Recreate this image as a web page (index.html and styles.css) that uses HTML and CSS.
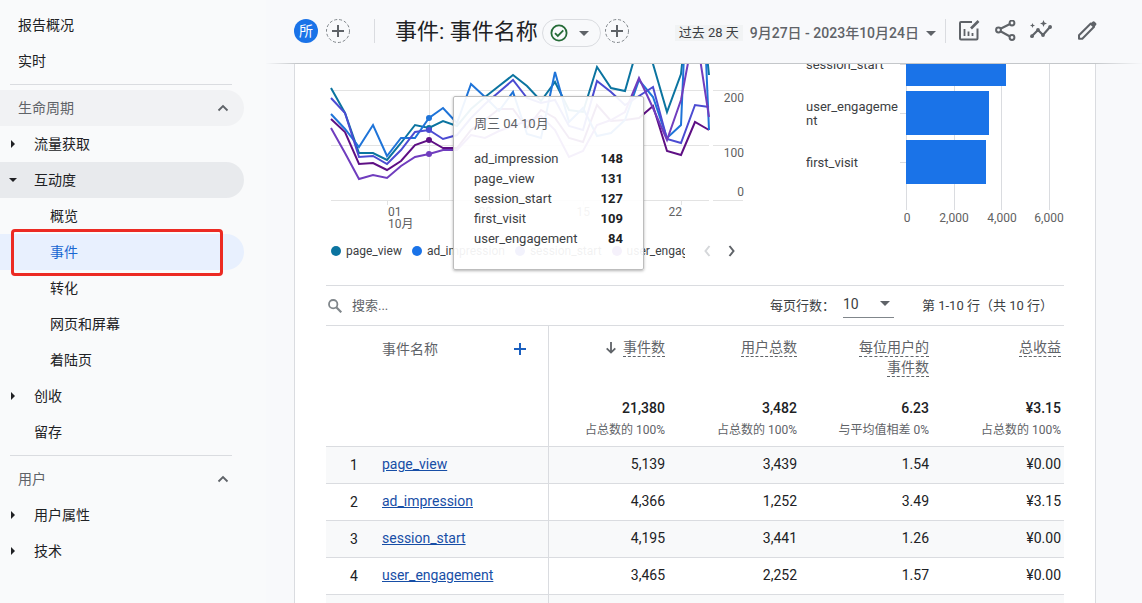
FILE: index.html
```html
<!DOCTYPE html>
<html lang="zh-CN">
<head>
<meta charset="utf-8">
<title>事件: 事件名称</title>
<link rel="stylesheet" href="styles.css">
</head>
<body>
<div class="app">
  <nav class="sidebar" aria-label="报告">
    <a class="nav-item" href="#">报告概况</a>
    <a class="nav-item" href="#">实时</a>
    <hr class="nav-rule">
    <button class="nav-item nav-head nav-shade">生命周期
      <svg class="chevron" viewBox="0 0 12 12"><path d="M1.500 8.500 6 4l4.500 4.500" fill="none" stroke="currentColor" stroke-width="1.800"/></svg>
    </button>
    <a class="nav-item nav-group" href="#"><svg class="tri" viewBox="0 0 8 8"><path d="M2 0l4 4-4 4z"/></svg>流量获取</a>
    <a class="nav-item nav-group nav-open" href="#"><svg class="tri" viewBox="0 0 8 8"><path d="M0 2h8L4 6z"/></svg>互动度</a>
    <a class="nav-item nav-sub" href="#">概览</a>
    <a class="nav-item nav-sub nav-current" href="#" aria-current="page">事件<span class="marker"></span></a>
    <a class="nav-item nav-sub" href="#">转化</a>
    <a class="nav-item nav-sub" href="#">网页和屏幕</a>
    <a class="nav-item nav-sub" href="#">着陆页</a>
    <a class="nav-item nav-group" href="#"><svg class="tri" viewBox="0 0 8 8"><path d="M2 0l4 4-4 4z"/></svg>创收</a>
    <a class="nav-item nav-leaf" href="#">留存</a>
    <hr class="nav-rule">
    <button class="nav-item nav-head">用户
      <svg class="chevron" viewBox="0 0 12 12"><path d="M1.500 8.500 6 4l4.500 4.500" fill="none" stroke="currentColor" stroke-width="1.800"/></svg>
    </button>
    <a class="nav-item nav-group" href="#"><svg class="tri" viewBox="0 0 8 8"><path d="M2 0l4 4-4 4z"/></svg>用户属性</a>
    <a class="nav-item nav-group" href="#"><svg class="tri" viewBox="0 0 8 8"><path d="M2 0l4 4-4 4z"/></svg>技术</a>
  </nav>

  <main class="main">
    <header class="topbar">
      <button class="avatar">所</button>
      <button class="add" aria-label="添加对比">
        <svg viewBox="0 0 24 24"><circle cx="12" cy="12" r="11.500" fill="none" stroke="#80868b" stroke-dasharray="3 2"/><path d="M12 6v12M6 12h12" stroke="#5f6368" stroke-width="2"/></svg>
      </button>
      <span class="divider divider-left"></span>
      <h1 class="title">事件: 事件名称</h1>
      <button class="status" aria-label="数据状态">
        <svg class="status-check" viewBox="0 0 18 18"><circle cx="9" cy="9" r="7.600" fill="none" stroke="#256b37" stroke-width="1.800"/><path d="M5 9.200l2.800 2.800 5.500-5.600" fill="none" stroke="#256b37" stroke-width="1.800"/></svg>
        <svg class="caret" viewBox="0 0 10 5"><path d="M0 0h10L5 5z"/></svg>
      </button>
      <button class="add" aria-label="添加过滤条件">
        <svg viewBox="0 0 24 24"><circle cx="12" cy="12" r="11.500" fill="none" stroke="#80868b" stroke-dasharray="3 2"/><path d="M12 6v12M6 12h12" stroke="#5f6368" stroke-width="2"/></svg>
      </button>
      <button class="daterange">
        <span class="preset">过去 28 天</span>
        <span class="dates">9月27日 - 2023年10月24日</span>
        <svg class="caret" viewBox="0 0 10 5"><path d="M0 0h10L5 5z"/></svg>
      </button>
      <span class="divider"></span>
      <div class="actions">
        <button class="icon" aria-label="自定义图表">
          <svg viewBox="0 0 22 22" fill="none" stroke="#5f6368" stroke-width="2"><path d="M14 2H3a1 1 0 0 0-1 1v15.500a1 1 0 0 0 1 1h15.500a1 1 0 0 0 1-1V8.500"/><path d="M6.500 9v7M10.500 11.500v4.500M14.500 13v3" stroke-width="1.800"/><path d="M13 8.500l7.500-7.500" stroke-width="2.600"/></svg>
        </button>
        <button class="icon" aria-label="分享">
          <svg viewBox="0 0 22 22" fill="none" stroke="#5f6368" stroke-width="2"><path d="M6 9l10-5M6 11l10 5.500"/><circle cx="4.500" cy="10" r="2.400"/><circle cx="18" cy="3" r="2.400"/><circle cx="18" cy="17.500" r="2.400"/></svg>
        </button>
        <button class="icon" aria-label="数据洞察">
          <svg viewBox="0 0 22 22"><path d="M2 16l6-6 5 5 7-8" fill="none" stroke="#5f6368" stroke-width="2.200"/><g fill="#5f6368"><circle cx="2" cy="16.200" r="1.900"/><circle cx="8" cy="10" r="1.900"/><circle cx="13" cy="15" r="1.900"/><circle cx="20.100" cy="7" r="1.900"/><path d="M13.500 0l1 2.500L17 3.500l-2.500 1-1 2.500-1-2.500-2.500-1 2.500-1zM2.500 3l.7 1.800L5 5.500l-1.800.7L2.500 8l-.7-1.800L0 5.500l1.800-.7z"/></g></svg>
        </button>
        <button class="icon icon-edit" aria-label="修改报告">
          <svg viewBox="0 0 22 22"><path d="M3 18.700v-3.400L14.800 3.500l3.300 3.300L6.300 18.700z" fill="none" stroke="#5f6368" stroke-width="2" stroke-linejoin="round"/><path d="M14.200 4.100l2.300-2.300c.7-.7 1.500-.7 2.200 0l1.200 1.200c.7.700.7 1.500 0 2.200l-2.300 2.300z" fill="#5f6368"/></svg>
        </button>
      </div>
    </header>

    <section class="card">
      <div class="charts">
        <div class="trend">
          <svg class="plot" viewBox="326 64 422 170" role="img" aria-label="事件数趋势">
            <g stroke="#e3e3e3"><path d="M331 90.500h378M713 90.500h30M331 145.500h378M713 145.500h30M331 200.500h378M713 200.500h30M429.500 64v136M387.500 200v5M681.500 200v5M485.500 200v5M583.500 200v5"/></g>
            <g fill="none" stroke-width="2" stroke-linejoin="miter">
              <polyline stroke="#5e0f84" points="331,119 345,132 359,164 373,163 387,170 401,161 415,145 429,140 443,148 457,148 471,130 485,120 499,109 513,109 527,128 541,110 555,118 569,138 583,142 597,105 611,121 625,120 639,118 653,106 667,151 681,155 695,122 709,130"/>
              <polyline stroke="#0b74a0" points="331,88 345,113 359,153 373,153 387,160 401,143 415,125 429,128 443,121 457,126 471,109 485,97 499,86 513,75 527,86 541,101 555,82 569,110 583,112 597,67 611,88 625,91 639,42 653,64 667,112 681,74 695,-60 709,75"/>
              <polyline stroke="#1f74d8" points="331,114 345,129 359,147 373,125 387,156 401,138 415,138 429,118 443,108 457,123 471,84 485,97 499,111 513,92 527,134 541,138 555,72 569,122 583,108 597,136 611,133 625,120 639,80 653,97 667,138 681,125 695,-200 709,130"/>
              <polyline stroke="#4b4bd2" points="331,98 345,113 359,157 373,156 387,164 401,150 415,132 429,130 443,139 457,135 471,118 485,104 499,92 513,80 527,98 541,103 555,100 569,126 583,130 597,81 611,92 625,105 639,96 653,87 667,139 681,143 695,105 709,107"/>
              <polyline stroke="#703dbe" points="331,128 345,153 359,179 373,175 387,178 401,166 415,157 429,154 443,150 457,150 471,135 485,138 499,131 513,126 527,121 541,116 555,130 569,157 583,151 597,125 611,120 625,112 639,78 653,108 667,140 681,100 695,26 709,117"/>
            </g>
            <circle cx="429" cy="128" r="3" fill="#0b74a0"/><circle cx="429" cy="118" r="3" fill="#1f74d8"/><circle cx="429" cy="130" r="3" fill="#4b4bd2"/><circle cx="429" cy="140" r="3" fill="#5e0f84"/><circle cx="429" cy="154" r="3" fill="#703dbe"/>
            <g class="axis"><text x="388" y="216">01</text><text x="388" y="228">10月</text></g>
            <g class="axis" text-anchor="end"><text x="492" y="216">08</text><text x="590" y="216">15</text><text x="682" y="216">22</text><text x="744" y="102">200</text><text x="744" y="157">100</text><text x="744" y="196">0</text></g>
          </svg>
          <div class="legend">
            <ul class="legend-items">
              <li><i class="dot dot-page"></i>page_view</li>
              <li><i class="dot dot-ad"></i>ad_impression</li>
              <li><i class="dot dot-session"></i>session_start</li>
              <li><i class="dot dot-user"></i>user_engagement</li>
            </ul>
            <button class="pager pager-off" aria-label="上一页"><svg viewBox="0 0 8 12"><path d="M6.500 1l-4 5 4 5" fill="none" stroke="currentColor" stroke-width="2"/></svg></button>
            <button class="pager" aria-label="下一页"><svg viewBox="0 0 8 12"><path d="M1.500 1l4 5-4 5" fill="none" stroke="currentColor" stroke-width="2"/></svg></button>
          </div>
          <div class="tooltip">
            <p class="tip-date">周三 04 10月</p>
            <dl class="tip-list">
              <dt>ad_impression</dt><dd>148</dd>
              <dt>page_view</dt><dd>131</dd>
              <dt>session_start</dt><dd>127</dd>
              <dt>first_visit</dt><dd>109</dd>
              <dt>user_engagement</dt><dd>84</dd>
            </dl>
          </div>
        </div>
        <div class="bars">
          <svg class="plot" viewBox="806 64 258 170" role="img" aria-label="各事件的事件数">
            <path stroke="#dadce0" d="M906.500 64v146M954.500 64v146M1001.500 64v146M1049.500 64v146M900 64.500h6M900 113.500h6M900 162.500h6"/>
            <g fill="#1a73e8"><path d="M906 64h100v22h-100zM906 91h83v44h-83zM906 140h80v44h-80z"/></g>
            <g class="bar-label"><text x="806" y="69">session_start</text><text x="806" y="111">user_engageme</text><text x="806" y="125">nt</text><text x="806" y="167">first_visit</text></g>
            <g class="axis" text-anchor="middle"><text x="907" y="222">0</text><text x="954" y="222">2,000</text><text x="1002" y="222">4,000</text><text x="1049" y="222">6,000</text></g>
          </svg>
        </div>
      </div>

      <div class="tools">
        <label class="search">
          <svg class="search-icon" viewBox="0 0 14 14"><circle cx="5.200" cy="5.200" r="4.200" fill="none" stroke="#80868b" stroke-width="1.800"/><path d="M8.300 8.300l5 5" stroke="#80868b" stroke-width="2.200"/></svg>
          <input class="search-input" type="text" placeholder="搜索..." aria-label="搜索">
        </label>
        <label class="rows-label" for="rows">每页行数：</label>
        <span class="rows">
          <select class="rows-select" id="rows"><option>10</option><option>25</option><option>50</option></select>
          <svg class="caret rows-caret" viewBox="0 0 10 5"><path d="M0 0h10L5 5z"/></svg>
        </span>
        <span class="range">第 1-10 行（共 10 行）</span>
      </div>

      <table class="grid">
        <colgroup><col class="c-rank"><col class="c-name"><col class="c-count"><col class="c-num"><col class="c-num"><col class="c-last"></colgroup>
        <thead>
          <tr class="heads">
            <th></th>
            <th class="name"><div class="name-head">事件名称<button class="plus" aria-label="添加维度"><svg viewBox="0 0 12 12"><path d="M6 0v12M0 6h12" stroke="#1a5fbf" stroke-width="2"/></svg></button></div></th>
            <th><svg class="sort" viewBox="0 0 10 12"><path d="M5 0v10.500M.7 6.300L5 10.600l4.300-4.300" fill="none" stroke="#5f6368" stroke-width="1.800"/></svg><span class="term">事件数</span></th>
            <th><span class="term">用户总数</span></th>
            <th><span class="term">每位用户的</span><br><span class="term">事件数</span></th>
            <th><span class="term">总收益</span></th>
          </tr>
          <tr class="totals">
            <td></td><td class="name"></td>
            <td><b>21,380</b><small>占总数的 100%</small></td>
            <td><b>3,482</b><small>占总数的 100%</small></td>
            <td><b>6.23</b><small>与平均值相差 0%</small></td>
            <td><b>¥3.15</b><small>占总数的 100%</small></td>
          </tr>
        </thead>
        <tbody>
          <tr><td>1</td><td class="name"><a href="#">page_view</a></td><td>5,139</td><td>3,439</td><td>1.54</td><td>¥0.00</td></tr>
          <tr><td>2</td><td class="name"><a href="#">ad_impression</a></td><td>4,366</td><td>1,252</td><td>3.49</td><td>¥3.15</td></tr>
          <tr><td>3</td><td class="name"><a href="#">session_start</a></td><td>4,195</td><td>3,441</td><td>1.26</td><td>¥0.00</td></tr>
          <tr><td>4</td><td class="name"><a href="#">user_engagement</a></td><td>3,465</td><td>2,252</td><td>1.57</td><td>¥0.00</td></tr>
          <tr><td></td><td class="name"></td><td></td><td></td><td></td><td></td></tr>
        </tbody>
      </table>
    </section>
  </main>
</div>
</body>
</html>
```
FILE: styles.css
```css
* { box-sizing: border-box; }

body {
  margin: 0;
  background: #f8f9fb;
  color: #202124;
  font: 14px/20px Roboto, "Noto Sans CJK SC", sans-serif;
}

button {
  padding: 0;
  border: 0;
  background: none;
  color: inherit;
  font: inherit;
}

svg { display: block; }

.app {
  display: flex;
  height: 100vh;
  overflow: hidden;
}

/* Sidebar */
.sidebar {
  flex: none;
  width: 266px;
  padding: 7px 22px 0 0;
  background: #f9fafb;
}

.nav-item {
  position: relative;
  display: flex;
  align-items: center;
  width: 100%;
  height: 36px;
  padding-left: 18px;
  border-radius: 0 18px 18px 0;
  color: #202124;
  text-decoration: none;
}

.nav-rule {
  height: 1px;
  margin: 5px 12px 5px 10px;
  border: 0;
  background: #dadce0;
}

.nav-head {
  justify-content: space-between;
  padding-right: 15px;
  color: #5f6368;
}

.nav-shade { background: #f1f2f4; }
.chevron { width: 12px; height: 12px; }
.nav-group { gap: 17px; padding-left: 9px; }
.tri { width: 8px; height: 8px; fill: #202124; }
.nav-open { background: #e8eaed; }
.nav-leaf { padding-left: 34px; }
.nav-sub { padding-left: 50px; }
.nav-current { background: #e8f0fe; color: #1967d2; }

.marker {
  position: absolute;
  inset: -5px 21px -6px 11px;
  border: 3px solid #ec2a23;
  border-radius: 4px;
}

/* Top bar */
.main {
  flex: 1;
  display: flex;
  flex-direction: column;
  min-width: 0;
}

.topbar {
  flex: none;
  display: flex;
  align-items: center;
  height: 64px;
  padding: 0 44px 1px 28px;
  border-bottom: 1px solid;
  border-image: linear-gradient(to right, #f8f9fb, #c4c7ca 32px calc(100% - 48px), #f8f9fb) 1;
}

.avatar {
  width: 24px;
  height: 24px;
  border-radius: 50%;
  background: #1a73e8;
  color: #fff;
}

.add {
  width: 24px;
  height: 24px;
  margin-left: 8px;
}

.divider {
  width: 1px;
  height: 24px;
  background: #dadce0;
}

.divider-left { margin: 0 20px 0 24px; }

.title {
  margin: 2px 0 0;
  font-size: 22px;
  font-weight: 400;
  line-height: 28px;
  white-space: nowrap;
}

.status {
  display: flex;
  align-items: center;
  justify-content: space-between;
  width: 59px;
  height: 28px;
  margin: 4px -4px 0 4px;
  padding: 0 11px 0 7px;
  border: 1px solid #dadce0;
  border-radius: 14px;
}

.status-check { width: 18px; height: 18px; }
.caret { width: 10px; height: 5px; fill: #5f6368; }

.daterange {
  display: flex;
  align-items: center;
  margin: 4px 9px 0 auto;
  white-space: nowrap;
}

.preset {
  margin-right: 7px;
  padding: 0 4px;
  background: #f1f3f4;
  color: #3c4043;
  font-size: 13px;
  line-height: 16px;
}

.dates {
  margin-right: 7px;
  color: #5f6368;
  font-weight: 500;
}

.actions {
  display: flex;
  gap: 14px;
  margin-left: 12px;
}

.icon { width: 22px; height: 22px; }
.icon-edit { margin-left: 10px; }

/* Report card */
.card {
  flex: 1;
  min-height: 0;
  margin: 0 46px 0 28px;
  padding: 0 31px;
  overflow: hidden;
  border: solid #dadce0;
  border-width: 0 1px;
  background: #fff;
}

.charts {
  display: grid;
  grid-template-columns: 422fr 258fr;
  gap: 58px;
  padding-bottom: 17px;
}

.trend { position: relative; min-width: 0; }
.plot { width: 100%; height: auto; }
.axis { fill: #616161; font-size: 12px; }
.bar-label { fill: #3c4043; font-size: 13px; }

.legend {
  display: flex;
  align-items: center;
  height: 34px;
  padding-left: 5px;
  color: #3c4043;
  font-size: 12px;
}

.legend-items {
  display: flex;
  flex: none;
  gap: 10px;
  width: 354px;
  margin: 0 18px 0 0;
  padding: 0;
  overflow: hidden;
  list-style: none;
}

.legend-items li {
  display: flex;
  align-items: center;
  gap: 5px;
}

.dot {
  width: 10px;
  height: 10px;
  border-radius: 50%;
}

.dot-page { background: #0b74a0; }
.dot-ad { background: #1a73e8; }
.dot-session { background: #4b4bd2; }
.dot-user { background: #703dbe; }

.pager {
  flex: none;
  width: 8px;
  margin-right: 17px;
  color: #5f6368;
}

.pager-off { color: #d5d7da; }

.tooltip {
  position: absolute;
  top: 32px;
  left: 127px;
  width: 191px;
  height: 174px;
  padding: 17px 20px;
  border: 1px solid #bdbdbd;
  border-radius: 2px;
  background: rgba(255, 255, 255, .93);
  box-shadow: 0 1px 3px rgba(0, 0, 0, .3);
  color: #3c4043;
  font-size: 13px;
}

.tip-date {
  margin: 0 0 15px;
  color: #5f6368;
}

.tip-list {
  display: grid;
  grid-template-columns: 1fr auto;
  margin: 0;
}

.tip-list dd {
  margin: 0;
  color: #202124;
  font-weight: 700;
  text-align: right;
}

/* Table toolbar */
.tools {
  display: flex;
  align-items: center;
  height: 41px;
  padding: 0 11px 0 2px;
  border: solid #dadce0;
  border-width: 1px 0;
  color: #3c4043;
  font-size: 13px;
}

.search {
  flex: 1;
  display: flex;
  align-items: center;
  gap: 10px;
}

.search-icon { width: 14px; height: 14px; }

.search-input {
  width: 160px;
  padding: 0;
  border: 0;
  background: none;
  font: inherit;
}

.search-input::placeholder { color: #5f6368; opacity: 1; }

.rows {
  position: relative;
  margin: 0 28px 0 8px;
}

.rows-select {
  display: block;
  width: 51px;
  height: 24px;
  padding: 0 0 5px;
  border: 0;
  border-bottom: 1px solid #80868b;
  border-radius: 0;
  background: none;
  color: #3c4043;
  font: inherit;
  font-size: 14px;
  appearance: none;
}

.rows-caret {
  position: absolute;
  top: 7px;
  right: 4px;
}

/* Data table */
.grid {
  width: 100%;
  border-collapse: separate;
  border-spacing: 0;
  table-layout: fixed;
}

.c-rank { width: 56px; }
.c-name { width: 167px; }
.c-count, .c-num { width: 132px; }
.c-last { width: 119px; }

.grid th, .grid td {
  padding: 0 16px 0 0;
  text-align: right;
  font-weight: 400;
}

.grid th:last-child, .grid td:last-child { padding-right: 3px; }
.grid td:first-child { padding: 0; text-align: center; }

.grid .name {
  border-right: 1px solid #dadce0;
  text-align: left;
}

.grid .heads th {
  height: 72px;
  padding-top: 11px;
  color: #5f6368;
  vertical-align: top;
}

.name-head {
  display: flex;
  align-items: center;
  justify-content: space-between;
  padding: 2px 6px 0 0;
}

.plus { width: 12px; }

.sort {
  display: inline-block;
  width: 10px;
  height: 12px;
  margin-right: 7px;
  vertical-align: -2px;
}

.term {
  padding-bottom: 1px;
  border-bottom: 1px dashed #5f6368;
}

.totals td {
  height: 49px;
  border-bottom: 1px solid #dadce0;
  vertical-align: top;
}

.totals b {
  display: block;
  font-weight: 500;
}

.totals small {
  display: block;
  margin-top: 2px;
  color: #5f6368;
  font-size: 12px;
}

.grid tbody td {
  height: 37px;
  padding-bottom: 2px;
  border-bottom: 1px solid #dadce0;
}

.grid tbody tr:nth-child(odd) { background: #f8f9fa; }
.grid a { color: #174ea6; }
```
